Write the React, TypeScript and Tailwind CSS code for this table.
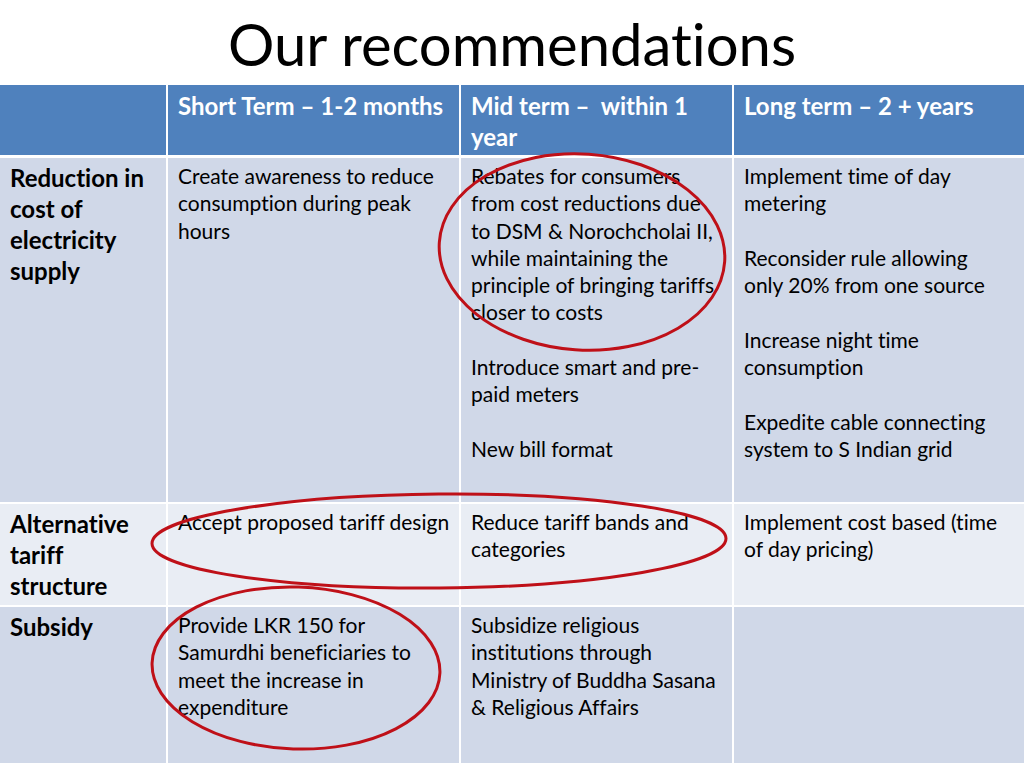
import React from "react";

const font = { fontFamily: "Lato, 'Open Sans', sans-serif" };

function Cell({ lines, bold, bg }: { lines: string[]; bold?: boolean; bg: string }) {
  return (
    <div
      className={`${bg} pl-[10px] pt-[4px] text-black ${
        bold ? "font-bold text-[24px] leading-[31px] pt-[3px]" : "text-[21px] leading-[27.3px]"
      }`}
    >
      {lines.map((l, i) => (
        <div key={i} className="whitespace-nowrap">
          {l || "\u00a0"}
        </div>
      ))}
    </div>
  );
}

const headers = [[""], ["Short Term – 1-2 months"], ["Mid term –  within 1", "year"], ["Long term – 2 + years"]];

const rows: { bg: string; h: string; cells: string[][] }[] = [
  {
    bg: "bg-[#d0d8e8]",
    h: "h-[344px]",
    cells: [
      ["Reduction in", "cost of", "electricity", "supply"],
      ["Create awareness to reduce", "consumption during peak", "hours"],
      [
        "Rebates for consumers",
        "from cost reductions due",
        "to DSM & Norochcholai II,",
        "while maintaining the",
        "principle of bringing tariffs",
        "closer to costs",
        "",
        "Introduce smart and pre-",
        "paid meters",
        "",
        "New bill format",
      ],
      [
        "Implement time of day",
        "metering",
        "",
        "Reconsider rule allowing",
        "only 20% from one source",
        "",
        "Increase night time",
        "consumption",
        "",
        "Expedite cable connecting",
        "system to S Indian grid",
      ],
    ],
  },
  {
    bg: "bg-[#e9edf4]",
    h: "h-[101px]",
    cells: [
      ["Alternative", "tariff", "structure"],
      ["Accept proposed tariff design"],
      ["Reduce tariff bands and", "categories"],
      ["Implement cost based (time", "of day pricing)"],
    ],
  },
  {
    bg: "bg-[#d0d8e8]",
    h: "h-[156px]",
    cells: [
      ["Subsidy"],
      ["Provide LKR 150 for", "Samurdhi beneficiaries to", "meet the increase in", "expenditure"],
      ["Subsidize religious", "institutions through", "Ministry of Buddha Sasana", "& Religious Affairs"],
      [],
    ],
  },
];

export default function App() {
  return (
    <div
      className="relative w-[1024px] h-[768px] overflow-hidden bg-white [font-variant-ligatures:none]"
      style={font}
    >
      <div className="h-[85px] flex items-end justify-center">
        <h1 className="text-[58px] leading-[82px] text-black">Our recommendations</h1>
      </div>
      <div className="grid grid-cols-[166px_291px_271px_1fr] gap-x-[2px] bg-white">
        {headers.map((h, i) => (
          <div
            key={i}
            className="h-[70px] bg-[#4f81bd] pl-[10px] pt-[5px] text-[24px] leading-[31px] font-bold text-white"
          >
            {h.map((l, j) => (
              <div key={j} className="whitespace-pre">
                {l || "\u00a0"}
              </div>
            ))}
          </div>
        ))}
      </div>
      <div className="h-[3px]" />
      <div className="flex flex-col gap-[2px]">
        {rows.map((r, i) => (
          <div key={i} className={`grid grid-cols-[166px_291px_271px_1fr] gap-x-[2px] ${r.h}`}>
            {r.cells.map((c, j) => (
              <Cell key={j} lines={c} bold={j === 0} bg={r.bg} />
            ))}
          </div>
        ))}
      </div>
      <svg className="absolute inset-0 pointer-events-none" width="1024" height="768" viewBox="0 0 1024 768">
        <g fill="none" stroke="#bf1018" strokeWidth="3">
          <ellipse cx="582" cy="252" rx="143" ry="98" transform="rotate(4 582 252)" />
          <ellipse cx="439" cy="541" rx="287" ry="47" transform="rotate(-0.5 439 541)" />
          <ellipse cx="296" cy="668" rx="144" ry="81" transform="rotate(2 296 668)" />
        </g>
      </svg>
    </div>
  );
}
